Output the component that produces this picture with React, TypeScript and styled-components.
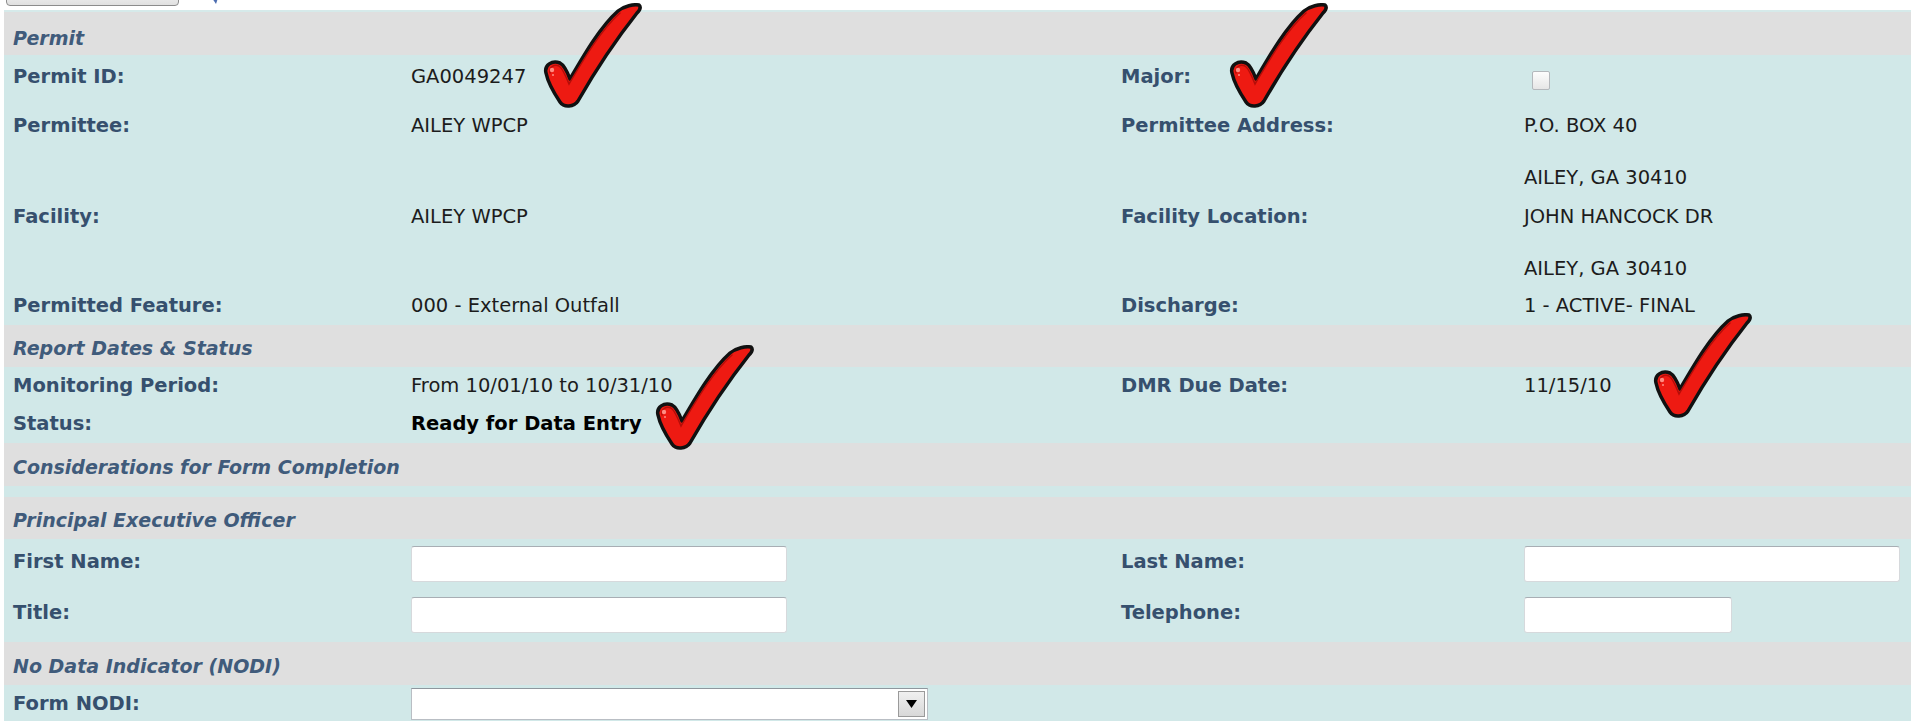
import React from "react";
import styled, { createGlobalStyle } from "styled-components";

const GlobalStyle = createGlobalStyle`
  html, body {
    margin: 0;
    padding: 0;
    background: #fff;
  }
`;

const LABEL = "#36506e";
const HEADER = "#405b7b";
const BLUE = "#d1e8e8";
const GREY = "#dfdfdf";

const Page = styled.div`
  position: relative;
  width: 1911px;
  height: 721px;
  overflow: hidden;
  box-sizing: border-box;
  padding-left: 4px;
  background: #fff;
  font-family: "DejaVu Sans", Verdana, Tahoma, sans-serif;
`;

const TopStrip = styled.div`
  height: 10px;
  display: flex;
  align-items: flex-start;
`;

const BackButton = styled.div`
  width: 173px;
  height: 18px;
  margin-top: -12px;
  margin-left: 2px;
  box-sizing: border-box;
  border: 1px solid #8c8c8c;
  border-radius: 4px;
  background: linear-gradient(#f6f6f6, #e0e0e0);
`;

const NavArrow = styled.svg`
  margin-left: 32px;
  margin-top: -2px;
  filter: blur(0.6px);
`;

const Form = styled.div`
  border-top: 2px solid #d6eaea;
`;

const SectionHeader = styled.div<{ $h: number; $pt?: number }>`
  height: ${({ $h }) => $h}px;
  box-sizing: border-box;
  padding: ${({ $pt }) => $pt ?? 4}px 9px 0;
  display: flex;
  align-items: center;
  background: ${GREY};
  color: ${HEADER};
  font-size: 19px;
  font-weight: bold;
  font-style: italic;
`;

const Section = styled.div`
  background: ${BLUE};
`;

const Strip = styled.div`
  height: 11px;
  background: ${BLUE};
`;

const Row = styled.div<{ $pt?: number; $pb?: number; $align?: string }>`
  display: grid;
  grid-template-columns: 398px 710px 403px 1fr;
  padding-top: ${({ $pt }) => $pt ?? 6}px;
  padding-bottom: ${({ $pb }) => $pb ?? 6}px;
  align-items: ${({ $align }) => $align ?? "start"};
`;

const Label = styled.div<{ $lift?: boolean }>`
  padding-left: 9px;
  margin-bottom: ${({ $lift }) => ($lift ? 5 : 0)}px;
  font-size: 19.5px;
  line-height: 26px;
  font-weight: bold;
  color: ${LABEL};
  white-space: nowrap;
`;

const Value = styled.div<{ $bold?: boolean }>`
  padding-left: 9px;
  font-size: 19.5px;
  line-height: 26px;
  font-weight: ${({ $bold }) => ($bold ? "bold" : "normal")};
  color: ${({ $bold }) => ($bold ? "#000" : "#1c1c1c")};
  white-space: pre-line;
`;

const Checkbox = styled.span`
  display: block;
  width: 18px;
  height: 19px;
  margin: 7px 0 0 17px;
  box-sizing: border-box;
  border: 1px solid #b4b8bc;
  border-radius: 2px;
  background: linear-gradient(#fdfdfd, #e6e6e6);
`;

const TextInput = styled.input<{ $w: number }>`
  display: block;
  width: ${({ $w }) => $w}px;
  height: 36px;
  margin-left: 9px;
  box-sizing: border-box;
  border: 1px solid #d6d9dc;
  border-top-color: #a8aeb4;
  border-radius: 3px;
  background: #fff;
  outline: none;
`;

const SelectBox = styled.div`
  width: 517px;
  height: 32px;
  margin-left: 9px;
  box-sizing: border-box;
  display: flex;
  align-items: center;
  justify-content: flex-end;
  padding-right: 2px;
  border: 1px solid #b9bec4;
  border-top-color: #8f969d;
  background: #fff;
`;

const ArrowButton = styled.span`
  width: 27px;
  height: 26px;
  box-sizing: border-box;
  display: flex;
  align-items: center;
  justify-content: center;
  border: 1px solid #9a9a9a;
  background: linear-gradient(#f0f0f0, #d8d8d8);
`;

const CheckMark = styled.svg<{ $x: number; $y: number }>`
  position: absolute;
  left: ${({ $x }) => $x}px;
  top: ${({ $y }) => $y}px;
  width: 100px;
  height: 106px;
  pointer-events: none;
`;

const checks = [
  { x: 542, y: 3 },
  { x: 1228, y: 3 },
  { x: 654, y: 345 },
  { x: 1652, y: 313 },
];

const Tick = ({ x, y }: { x: number; y: number }) => (
  <CheckMark $x={x} $y={y} viewBox="0 0 100 106">
    <path
      d="M 4 70 C 2 62, 10 57, 18 60 C 22 62, 25 68, 28 76 C 42 52, 58 24, 76 8 C 82 3, 92 1, 97 2 C 99 4, 98 7, 95 10 C 76 34, 52 70, 36 98 C 32 104, 22 105, 18 99 C 12 90, 6 80, 4 70 Z"
      fill="#ee1a12"
      stroke="#111"
      strokeWidth="3.5"
      strokeLinejoin="round"
    />
    <path
      d="M 8 70 C 7 64, 12 61, 17 63 C 20 65, 23 71, 27 81 C 42 56, 58 28, 78 10"
      fill="none"
      stroke="#b50d08"
      strokeWidth="1.5"
      strokeLinecap="round"
    />
    <circle cx="10" cy="67" r="2.2" fill="#ff8c82" />
    <circle cx="11" cy="72" r="1" fill="#ff8c82" />
  </CheckMark>
);

const App = () => {
  return (
    <Page>
      <GlobalStyle />
      <TopStrip>
        <BackButton />
        <NavArrow width="8" height="6" viewBox="0 0 8 6">
          <path d="M 1 0 L 7 0 L 5 6 Z" fill="#4c6db0" />
        </NavArrow>
      </TopStrip>

      <Form>
        <SectionHeader $h={43} $pt={8}>Permit</SectionHeader>
        <Section>
          <Row $pt={9} $pb={17}>
            <Label>Permit ID:</Label>
            <Value>GA0049247</Value>
            <Label>Major:</Label>
            <Checkbox />
          </Row>
          <Row $pb={7}>
            <Label>Permittee:</Label>
            <Value>AILEY WPCP</Value>
            <Label>Permittee Address:</Label>
            <Value>{"P.O. BOX 40\n\nAILEY, GA 30410"}</Value>
          </Row>
          <Row>
            <Label>Facility:</Label>
            <Value>AILEY WPCP</Value>
            <Label>Facility Location:</Label>
            <Value>{"JOHN HANCOCK DR\n\nAILEY, GA 30410"}</Value>
          </Row>
          <Row $pt={5} $pb={6}>
            <Label>Permitted Feature:</Label>
            <Value>000 - External Outfall</Value>
            <Label>Discharge:</Label>
            <Value>1 - ACTIVE- FINAL</Value>
          </Row>
        </Section>

        <SectionHeader $h={42}>Report Dates &amp; Status</SectionHeader>
        <Section>
          <Row>
            <Label>Monitoring Period:</Label>
            <Value>From 10/01/10 to 10/31/10</Value>
            <Label>DMR Due Date:</Label>
            <Value>11/15/10</Value>
          </Row>
          <Row>
            <Label>Status:</Label>
            <Value $bold>Ready for Data Entry</Value>
          </Row>
        </Section>

        <SectionHeader $h={43}>Considerations for Form Completion</SectionHeader>
        <Strip />

        <SectionHeader $h={42}>Principal Executive Officer</SectionHeader>
        <Section>
          <Row $pt={7} $pb={7} $align="center">
            <Label $lift>First Name:</Label>
            <TextInput $w={376} />
            <Label $lift>Last Name:</Label>
            <TextInput $w={376} />
          </Row>
          <Row $pt={8} $pb={9} $align="center">
            <Label $lift>Title:</Label>
            <TextInput $w={376} />
            <Label $lift>Telephone:</Label>
            <TextInput $w={208} />
          </Row>
        </Section>

        <SectionHeader $h={43}>No Data Indicator (NODI)</SectionHeader>
        <Section>
          <Row $pt={3} $pb={8} $align="center">
            <Label>Form NODI:</Label>
            <SelectBox>
              <ArrowButton>
                <svg width="11" height="8" viewBox="0 0 11 8">
                  <path d="M 0 0 L 11 0 L 5.5 8 Z" fill="#000" />
                </svg>
              </ArrowButton>
            </SelectBox>
          </Row>
        </Section>
      </Form>

      {checks.map((c, i) => (
        <Tick key={i} x={c.x} y={c.y} />
      ))}
    </Page>
  );
};

export default App;
